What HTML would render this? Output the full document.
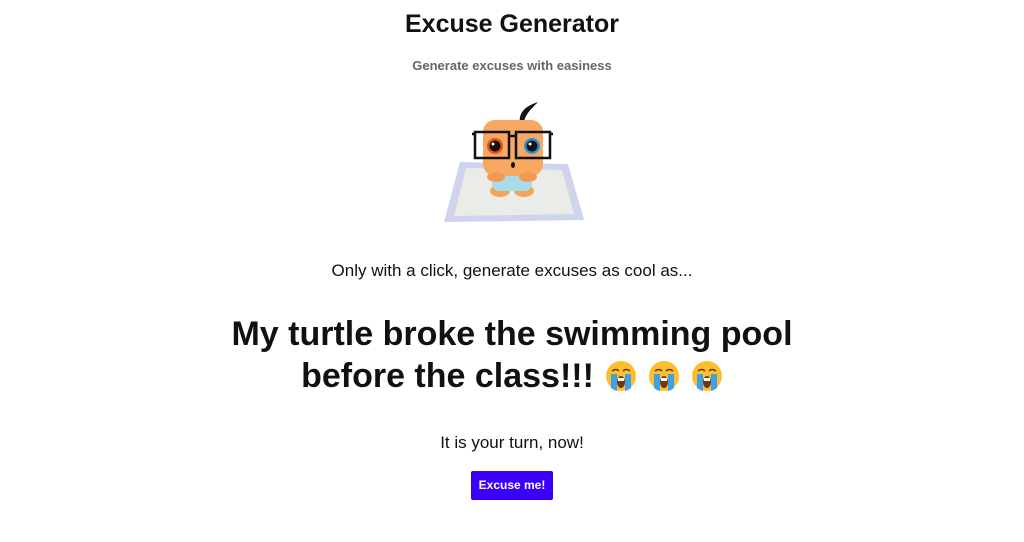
<!DOCTYPE html>
<html><head><meta charset="utf-8"><style>
html,body{margin:0;padding:0;background:#fff;width:1024px;height:542px;overflow:hidden;font-family:"Liberation Sans",Arial,sans-serif;color:#111;}
.c{position:absolute;left:0;width:1024px;text-align:center;white-space:nowrap}
.em{display:inline-block;width:32px;height:32px;vertical-align:-5px;margin-left:11px}
</style></head><body>
<div class="c" style="top:10px;font-size:25px;font-weight:bold">Excuse Generator</div>
<div class="c" style="top:58px;font-size:13px;font-weight:bold;color:#666">Generate excuses with easiness</div>
<svg style="position:absolute;left:440px;top:98px" width="148" height="128" viewBox="0 0 148 128">
<path d="M20 64 L128 66 L144 122 L4 124 Z" fill="#cdd4ec"/>
<path d="M26 70 L122 72 L134 116 L14 118 Z" fill="#ebebe8"/>
<path d="M80 26 C78 14 86 8 98 4 C90 12 84 18 84 26Z" fill="#111"/>
<ellipse cx="60" cy="93" rx="10" ry="6" fill="#f5a25a"/>
<ellipse cx="84" cy="93" rx="10" ry="6" fill="#f5a25a"/>
<rect x="52" y="78" width="40" height="15" rx="7" fill="#a8dcea"/>
<rect x="43" y="22" width="60" height="56" rx="12" fill="#f8a860"/>
<ellipse cx="56" cy="79" rx="9" ry="5" fill="#f29a52"/>
<ellipse cx="88" cy="79" rx="9" ry="5" fill="#f29a52"/>
<g fill="none" stroke="#111" stroke-width="2.5"><rect x="35" y="34" width="34" height="26"/><rect x="76" y="34" width="34" height="26"/><path d="M69 38H76M32 36H35M110 36H113"/></g>
<circle cx="55" cy="48" r="8" fill="#e8501c"/><circle cx="55" cy="48" r="5.5" fill="#111"/><circle cx="53" cy="46" r="1.5" fill="#fff"/>
<circle cx="92" cy="48" r="8" fill="#2a92d6"/><circle cx="92" cy="48" r="5.5" fill="#111"/><circle cx="90" cy="46" r="1.5" fill="#fff"/>
<ellipse cx="73" cy="67" rx="2" ry="3" fill="#111"/>
</svg>
<div class="c" style="top:261px;font-size:17px">Only with a click, generate excuses as cool as...</div>
<div class="c" style="top:313px;font-size:34px;font-weight:bold;line-height:42px">My turtle broke the swimming pool<br>before the class!!!<svg class="em" viewBox="0 0 32 32"><circle cx="16" cy="16" r="15" fill="#fbbf2f"/><path d="M6 14v14a15 15 0 0 0 6 3v-17zM26 14v14a15 15 0 0 1-6 3v-17z" fill="#3fa0e8"/><path d="M7 11q4-3 7 0M18 11q3-3 7 0" stroke="#6b3a10" stroke-width="1.5" fill="none"/><ellipse cx="16" cy="22" rx="4" ry="6" fill="#6b3a10"/><rect x="13" y="18" width="6" height="3" fill="#fff"/></svg><svg class="em" viewBox="0 0 32 32"><circle cx="16" cy="16" r="15" fill="#fbbf2f"/><path d="M6 14v14a15 15 0 0 0 6 3v-17zM26 14v14a15 15 0 0 1-6 3v-17z" fill="#3fa0e8"/><path d="M7 11q4-3 7 0M18 11q3-3 7 0" stroke="#6b3a10" stroke-width="1.5" fill="none"/><ellipse cx="16" cy="22" rx="4" ry="6" fill="#6b3a10"/><rect x="13" y="18" width="6" height="3" fill="#fff"/></svg><svg class="em" viewBox="0 0 32 32"><circle cx="16" cy="16" r="15" fill="#fbbf2f"/><path d="M6 14v14a15 15 0 0 0 6 3v-17zM26 14v14a15 15 0 0 1-6 3v-17z" fill="#3fa0e8"/><path d="M7 11q4-3 7 0M18 11q3-3 7 0" stroke="#6b3a10" stroke-width="1.5" fill="none"/><ellipse cx="16" cy="22" rx="4" ry="6" fill="#6b3a10"/><rect x="13" y="18" width="6" height="3" fill="#fff"/></svg></div>
<div class="c" style="top:433px;font-size:17px">It is your turn, now!</div>
<div style="position:absolute;left:471px;top:471px;width:82px;height:29px;background:#3a00f8;border-radius:2px;color:#fff;font-size:12px;font-weight:bold;text-align:center;line-height:29px">Excuse me!</div>
</body></html>
